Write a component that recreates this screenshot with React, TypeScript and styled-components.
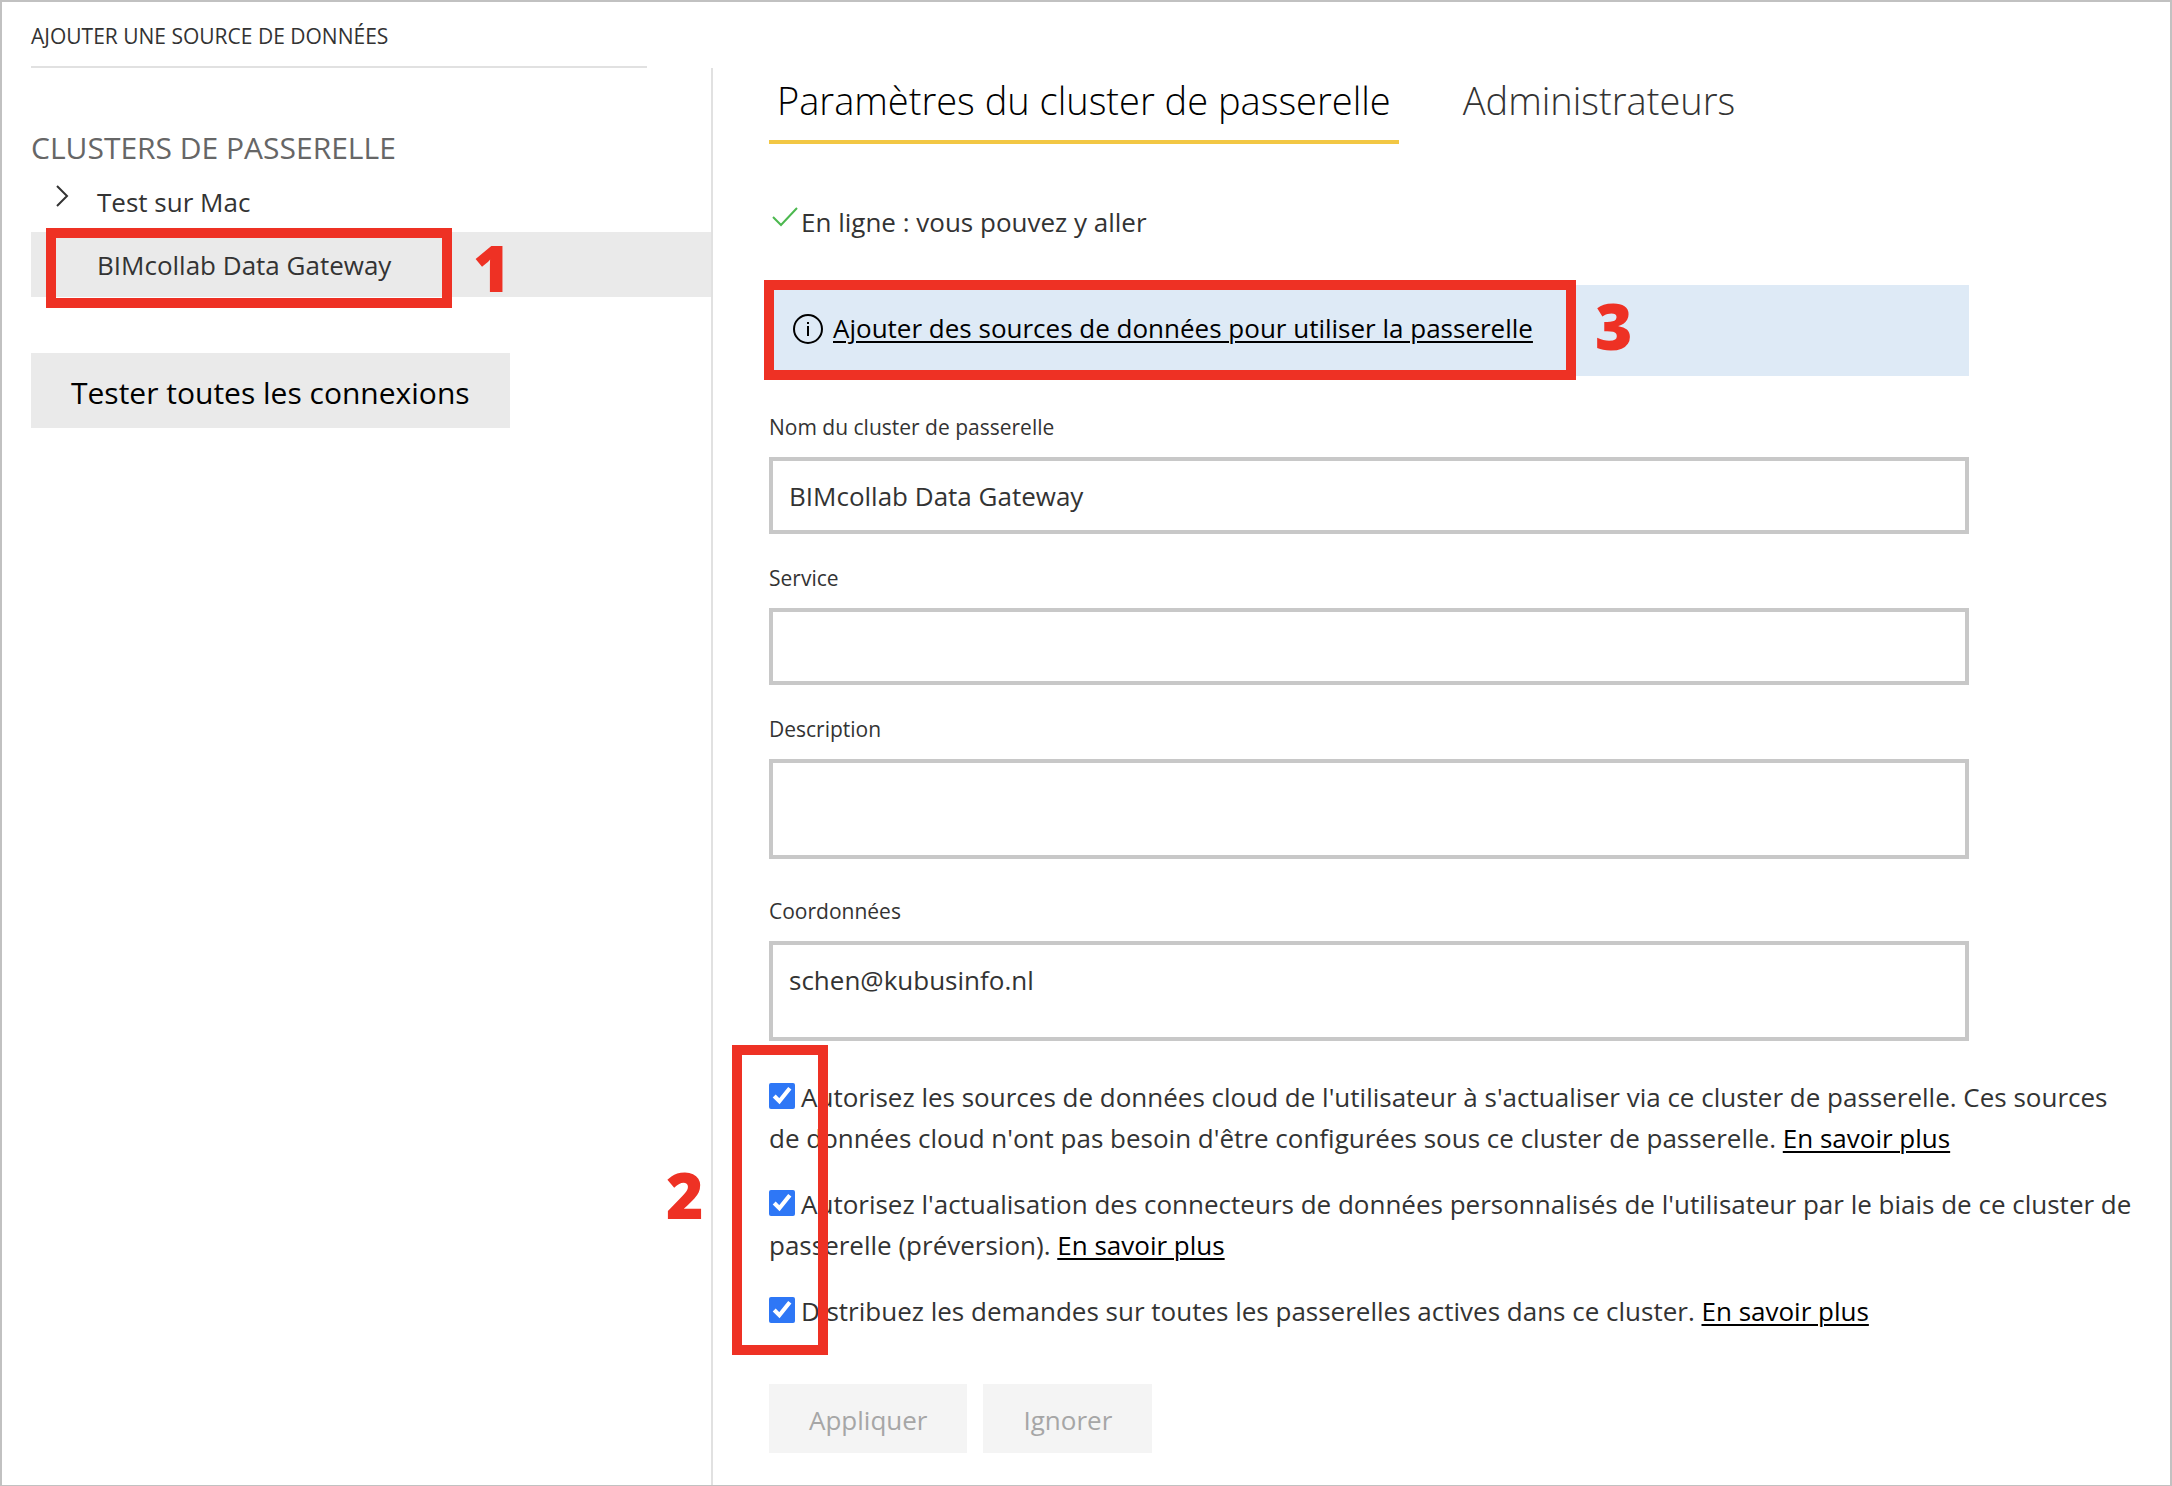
import React from 'react';
import styled, { createGlobalStyle, css } from 'styled-components';

const red = '#ee3124';

const GlobalStyle = createGlobalStyle`
  *, *::before, *::after { box-sizing: border-box; }
  body {
    margin: 0;
    background: #fff;
    color: #333;
    font-family: 'Open Sans', 'Noto Sans', sans-serif;
    font-size: 26px;
    line-height: 41px;
  }
  button, input, textarea { font: inherit; color: inherit; margin: 0; border-radius: 0; }
  button { border: 0; background: none; padding: 0; text-align: left; cursor: pointer; }
`;

const Page = styled.div`
  display: grid;
  grid-template-columns: 709px minmax(0, 1fr);
  min-height: 100vh;
  border: 2px solid #c1c1c1;
`;

const Sidebar = styled.nav`
  padding-left: 29px;
`;

const AddSource = styled.button`
  display: block;
  width: calc(100% - 64px);
  height: 66px;
  padding-top: 4px;
  border-bottom: 2px solid #e1e1e1;
  font-size: 21px;
  line-height: 60px;
`;

const ClusterHeading = styled.h2`
  margin: 58px 0 0;
  font-size: 30px;
  font-weight: 400;
  line-height: 44px;
  color: #666;
`;

const ClusterList = styled.ul`
  list-style: none;
  margin: 0;
  padding: 0;
`;

const ClusterItem = styled.li<{ $selected?: boolean }>`
  display: flex;
  height: ${({ $selected }) => ($selected ? 65 : 62)}px;
  background: ${({ $selected }) => ($selected ? '#eaeaea' : 'transparent')};
`;

const ClusterButton = styled.button`
  position: relative;
  display: flex;
  flex: 1;
  align-items: center;
  gap: 28px;
  padding: 2px 0 0 24px;
`;

const ChevronIcon = styled.svg`
  width: 14px;
  height: 22px;
  margin-bottom: 12px;
`;

const ChevronSpace = styled.span`
  width: 14px;
`;

const TestButton = styled.button`
  margin-top: 56px;
  padding: 4px 40px 0;
  background: #eaeaea;
  color: #000;
  font-size: 30px;
  line-height: 71px;
`;

const Main = styled.main`
  margin-top: 66px;
  padding: 0 32px 32px 56px;
  border-left: 2px solid #e1e1e1;
`;

const Tabs = styled.div`
  display: flex;
  gap: 56px;
`;

const Tab = styled.button<{ $active?: boolean }>`
  height: 76px;
  padding: 0 8px 8px;
  border-bottom: 4px solid ${({ $active }) => ($active ? '#f2c744' : 'transparent')};
  color: ${({ $active }) => ($active ? '#000' : '#333')};
  font-size: 38px;
  font-weight: 300;
  line-height: 60px;
`;

const Status = styled.p`
  display: flex;
  align-items: center;
  gap: 2px;
  margin: 58px 0 42px;
`;

const CheckIcon = styled.svg`
  width: 30px;
  height: 24px;
  margin-bottom: 14px;
`;

const Form = styled.form`
  padding-top: 7px;
`;

const InfoBar = styled.div`
  position: relative;
  display: flex;
  align-items: center;
  gap: 10px;
  max-width: 1200px;
  height: 91px;
  padding: 0 24px 4px;
  background: #deeaf6;
`;

const InfoIcon = styled.svg`
  width: 30px;
  height: 30px;
`;

const Link = styled.a`
  color: #000;
  text-decoration: underline;
  text-decoration-thickness: 2px;
  text-underline-offset: 3px;
`;

const Field = styled.div`
  display: flex;
  flex-direction: column;
  max-width: 1200px;
  margin-top: 30px;
`;

const FieldLabel = styled.label`
  margin-bottom: 16px;
  font-size: 21px;
  line-height: 28px;
`;

const controlStyle = css`
  width: 100%;
  border: 4px solid #c8c8c8;
  background: #fff;
  outline: 0;
`;

const TextInput = styled.input`
  ${controlStyle}
  height: 77px;
  padding: 0 16px;
`;

const TextArea = styled.textarea`
  ${controlStyle}
  display: block;
  height: 100px;
  margin-bottom: 8px;
  padding: 15px 16px;
  resize: none;
`;

const Options = styled.div`
  position: relative;
  display: flex;
  flex-direction: column;
  gap: 25px;
  margin-top: 28px;
`;

const Option = styled.p`
  margin: 0;
`;

const Checkbox = styled.input`
  width: 26px;
  height: 26px;
  margin: 0 6px 0 0;
  vertical-align: -2px;
  accent-color: #2e77f6;
`;

const Actions = styled.div`
  display: flex;
  gap: 16px;
  margin-top: 52px;
`;

const ActionButton = styled.button`
  padding: 4px 40px 0;
  background: #f4f4f4;
  color: #a6a6a6;
  line-height: 65px;
`;

const Frame = styled.span<{ $top: number; $left: number; $width: number; $height: number }>`
  position: absolute;
  top: ${({ $top }) => $top}px;
  left: ${({ $left }) => $left}px;
  width: ${({ $width }) => $width}px;
  height: ${({ $height }) => $height}px;
  border: 10px solid ${red};
  pointer-events: none;
`;

const Step = styled.span<{ $top: number; $left: number }>`
  position: absolute;
  top: ${({ $top }) => $top}px;
  left: ${({ $left }) => $left}px;
  color: ${red};
  font-size: 64px;
  font-weight: 800;
  line-height: 64px;
  pointer-events: none;
`;

const options = [
  {
    id: 'cloud',
    text: "Autorisez les sources de données cloud de l'utilisateur à s'actualiser via ce cluster de passerelle. Ces sources de données cloud n'ont pas besoin d'être configurées sous ce cluster de passerelle.",
  },
  {
    id: 'connectors',
    text: "Autorisez l'actualisation des connecteurs de données personnalisés de l'utilisateur par le biais de ce cluster de passerelle (préversion).",
  },
  {
    id: 'distribute',
    text: 'Distribuez les demandes sur toutes les passerelles actives dans ce cluster.',
  },
];

export default function App() {
  return (
    <>
      <GlobalStyle />
      <Page>
        <Sidebar>
          <AddSource type="button">AJOUTER UNE SOURCE DE DONNÉES</AddSource>
          <ClusterHeading>CLUSTERS DE PASSERELLE</ClusterHeading>
          <ClusterList>
            <ClusterItem>
              <ClusterButton type="button">
                <ChevronIcon viewBox="0 0 14 22" fill="none" stroke="#333" strokeWidth="2" aria-hidden="true">
                  <path d="M2 1l10 10L2 21" />
                </ChevronIcon>
                Test sur Mac
              </ClusterButton>
            </ClusterItem>
            <ClusterItem $selected>
              <ClusterButton type="button">
                <ChevronSpace />
                BIMcollab Data Gateway
                <Frame $top={-4} $left={15} $width={406} $height={80} />
                <Step $top={4} $left={442}>1</Step>
              </ClusterButton>
            </ClusterItem>
          </ClusterList>
          <TestButton type="button">Tester toutes les connexions</TestButton>
        </Sidebar>

        <Main>
          <Tabs role="tablist">
            <Tab type="button" role="tab" aria-selected="true" $active>
              Paramètres du cluster de passerelle
            </Tab>
            <Tab type="button" role="tab" aria-selected="false">
              Administrateurs
            </Tab>
          </Tabs>

          <Status>
            <CheckIcon viewBox="0 0 30 24" fill="none" stroke="#4cb84f" strokeWidth="2" aria-hidden="true">
              <path d="M4 13l8 8L28 4" />
            </CheckIcon>
            En ligne : vous pouvez y aller
          </Status>

          <InfoBar>
            <InfoIcon viewBox="0 0 30 30" fill="none" stroke="#000" strokeWidth="2" aria-hidden="true">
              <circle cx="15" cy="15" r="14" />
              <path d="M15 12v10M15 8v2" />
            </InfoIcon>
            <Link href="#sources">Ajouter des sources de données pour utiliser la passerelle</Link>
            <Frame $top={-5} $left={-5} $width={812} $height={100} />
            <Step $top={9} $left={826}>3</Step>
          </InfoBar>

          <Form onSubmit={(event) => event.preventDefault()}>
            <Field>
              <FieldLabel htmlFor="name">Nom du cluster de passerelle</FieldLabel>
              <TextInput id="name" type="text" defaultValue="BIMcollab Data Gateway" />
            </Field>
            <Field>
              <FieldLabel htmlFor="service">Service</FieldLabel>
              <TextInput id="service" type="text" />
            </Field>
            <Field>
              <FieldLabel htmlFor="description">Description</FieldLabel>
              <TextArea id="description" />
            </Field>
            <Field>
              <FieldLabel htmlFor="contact">Coordonnées</FieldLabel>
              <TextArea id="contact" defaultValue="schen@kubusinfo.nl" />
            </Field>

            <Options>
              {options.map(({ id, text }) => (
                <Option key={id}>
                  <Checkbox id={id} type="checkbox" defaultChecked />
                  <label htmlFor={id}>{text}</label>{' '}
                  <Link href={`#${id}`}>En savoir plus</Link>
                </Option>
              ))}
              <Frame $top={-32} $left={-37} $width={96} $height={310} />
              <Step $top={86} $left={-103}>2</Step>
            </Options>

            <Actions>
              <ActionButton type="submit" disabled>Appliquer</ActionButton>
              <ActionButton type="reset" disabled>Ignorer</ActionButton>
            </Actions>
          </Form>
        </Main>
      </Page>
    </>
  );
}
